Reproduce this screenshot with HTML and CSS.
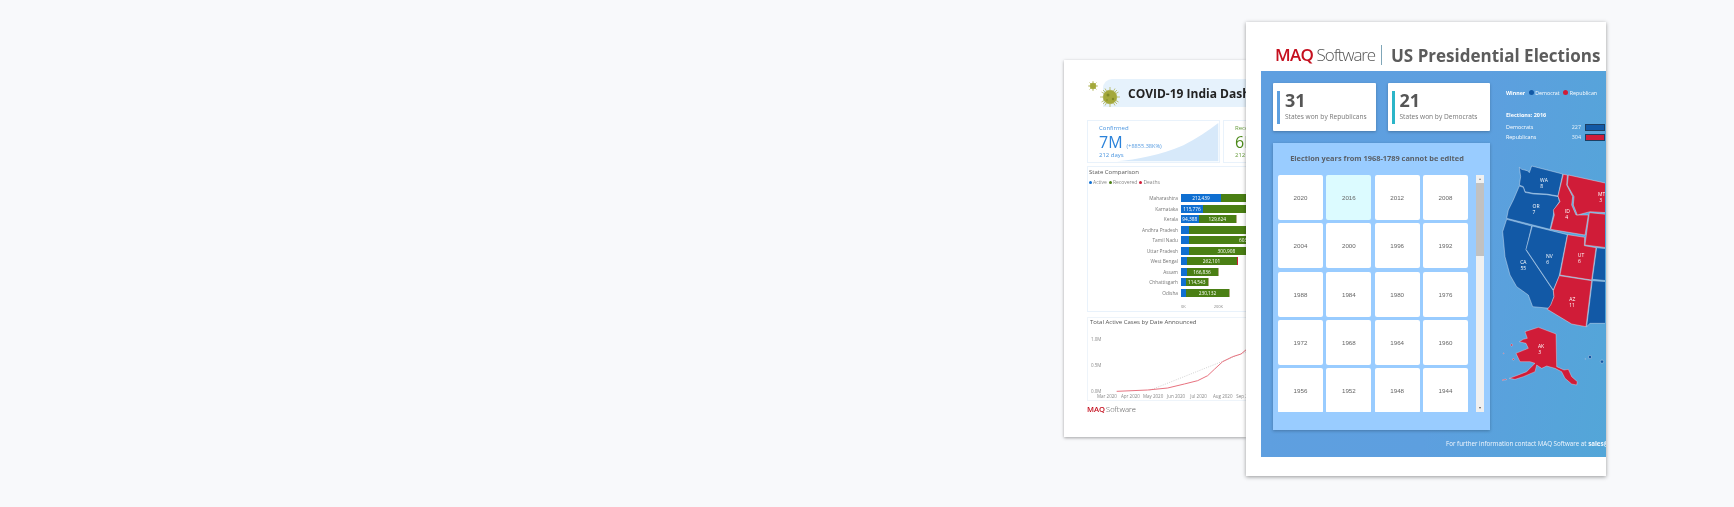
FILE: index.html
```html
<!DOCTYPE html>
<html lang="en">
<head>
<meta charset="utf-8">
<title>Power BI report showcase</title>
<link rel="stylesheet" href="styles.css">
</head>
<body>
<main class="stage">
  <article class="sheet covid">
    <header class="covid-head">
      <svg class="virus" viewBox="0 0 32 30" width="32" height="30">
        <g stroke="#a9ad45" stroke-width="0.7" fill="#a3a83a">
          <path d="M5 2v10M0 7h10M1.5 3.5l7 7M8.5 3.5l-7 7"/>
          <circle cx="5" cy="7" r="3"/>
          <path d="M22 8v20M12 18h20M15 11l14 14M29 11L15 25M17 9.5l10 17M27 9.5l-10 17M13.500 13l17 10M30.500 13l-17 10"/>
          <circle cx="22" cy="18" r="6.800"/>
        </g>
        <circle cx="20" cy="16" r="1.500" fill="#7f8a26"/>
        <circle cx="25" cy="20" r="1.200" fill="#7f8a26"/>
        <circle cx="19" cy="21" r="1" fill="#8d9630"/>
      </svg>
      <div class="covid-band"><h1 class="covid-title">COVID-19 India Dashboard</h1></div>
    </header>
    <section class="kpis">
      <div class="kpi">
        <svg class="kpi-area" viewBox="200 215 307 120" width="102" height="40"><path d="M200 333C260 328 330 315 400 285C440 265 475 240 505 218V333Z" fill="#d7e9fa"/></svg>
        <div class="kpi-label">Confirmed</div>
        <div class="kpi-value"><span class="kpi-big">7M</span><span class="kpi-delta">(+8855.38K%)</span></div>
        <div class="kpi-label">212 days</div>
      </div>
      <div class="kpi kpi-green">
        <div class="kpi-label">Recovered</div>
        <div class="kpi-value"><span class="kpi-big">6M</span></div>
        <div class="kpi-label">212 days</div>
      </div>
    </section>
    <section class="states">
      <h2 class="box-title">State Comparison</h2>
      <div class="legend">
        <span class="dot dot-blue"></span>Active
        <span class="dot dot-green"></span>Recovered
        <span class="dot dot-red"></span>Deaths
      </div>
      <div class="bar-rows">
        <div class="bar-row"><span class="bar-name">Maharashtra</span><span class="seg seg-a" style="width:40px">212,439</span><span class="seg seg-r" style="width:160px"></span></div>
        <div class="bar-row"><span class="bar-name">Karnataka</span><span class="seg seg-a" style="width:22px">115,776</span><span class="seg seg-r" style="width:160px"></span></div>
        <div class="bar-row"><span class="bar-name">Kerala</span><span class="seg seg-a" style="width:17.5px">94,388</span><span class="seg seg-r" style="width:37.5px">129,624</span><span class="seg seg-d" style="width:1px"></span></div>
        <div class="bar-row"><span class="bar-name">Andhra Pradesh</span><span class="seg seg-a" style="width:8px"></span><span class="seg seg-r" style="width:160px"></span></div>
        <div class="bar-row"><span class="bar-name">Tamil Nadu</span><span class="seg seg-a" style="width:8px"></span><span class="seg seg-r seg-end" style="width:160px">603,131</span></div>
        <div class="bar-row"><span class="bar-name">Uttar Pradesh</span><span class="seg seg-a" style="width:7.5px"></span><span class="seg seg-r seg-mid" style="width:160px">300,908</span></div>
        <div class="bar-row"><span class="bar-name">West Bengal</span><span class="seg seg-a" style="width:5.5px"></span><span class="seg seg-r" style="width:50px">262,101</span><span class="seg seg-x" style="width:1.5px"></span></div>
        <div class="bar-row"><span class="bar-name">Assam</span><span class="seg seg-a" style="width:5.5px"></span><span class="seg seg-r" style="width:31px">166,836</span><span class="seg seg-d" style="width:.5px"></span></div>
        <div class="bar-row"><span class="bar-name">Chhattisgarh</span><span class="seg seg-a" style="width:5px"></span><span class="seg seg-r" style="width:21.5px">114,543</span><span class="seg seg-d" style="width:.7px"></span></div>
        <div class="bar-row"><span class="bar-name">Odisha</span><span class="seg seg-a" style="width:5px"></span><span class="seg seg-r" style="width:43px">230,132</span><span class="seg seg-d" style="width:.7px"></span></div>
      </div>
      <div class="axis"><span>0K</span><span>200K</span></div>
    </section>
    <section class="cases">
      <h2 class="box-title">Total Active Cases by Date Announced</h2>
      <svg class="cases-plot" viewBox="111 51 600 222" width="200" height="74">
        <g class="plot-labels">
          <text x="120" y="92">1.0M</text>
          <text x="120" y="170">0.5M</text>
          <text x="120" y="248">0.0M</text>
          <text x="138" y="263">Mar 2020</text>
          <text x="210" y="263">Apr 2020</text>
          <text x="276" y="263">May 2020</text>
          <text x="348" y="263">Jun 2020</text>
          <text x="418" y="263">Jul 2020</text>
          <text x="486" y="263">Aug 2020</text>
          <text x="556" y="263">Sep 2020</text>
        </g>
        <path d="M296 241L600 120" fill="none" stroke="#bbb" stroke-width="2" stroke-dasharray="3 4"/>
        <path d="M197 244L290 240L350 234L400 222L440 212L470 197L490 178L515 155L545 140L570 132L588 117L620 100" fill="none" stroke="#e8727f" stroke-width="3"/>
      </svg>
    </section>
    <div class="brand brand-small"><span class="brand-maq">MAQ</span> <span class="brand-soft">Software</span></div>
  </article>

  <article class="sheet elections">
    <header class="el-head">
      <div class="brand brand-large"><span class="brand-maq">MAQ</span> <span class="brand-soft">Software</span></div>
      <span class="el-rule"></span>
      <h1 class="el-title">US Presidential Elections</h1>
    </header>
    <div class="el-body">
      <div class="el-main">
        <div class="el-left">
          <div class="tallies">
            <div class="tally tally-rep">
              <div class="tally-num">31</div>
              <div class="tally-text">States won by Republicans</div>
            </div>
            <div class="tally tally-dem">
              <div class="tally-num">21</div>
              <div class="tally-text">States won by Democrats</div>
            </div>
          </div>
          <section class="years">
            <h2 class="years-title">Election years from 1968-1789 cannot be edited</h2>
            <div class="years-scroll">
              <div class="years-grid">
                <div class="year">2020</div><div class="year year-on">2016</div><div class="year">2012</div><div class="year">2008</div>
                <div class="year">2004</div><div class="year">2000</div><div class="year">1996</div><div class="year">1992</div>
                <div class="year">1988</div><div class="year">1984</div><div class="year">1980</div><div class="year">1976</div>
                <div class="year">1972</div><div class="year">1968</div><div class="year">1964</div><div class="year">1960</div>
                <div class="year">1956</div><div class="year">1952</div><div class="year">1948</div><div class="year">1944</div>
              </div>
              <div class="scrollbar">
                <span class="arrow arrow-up"></span>
                <span class="thumb"></span>
                <span class="arrow arrow-down"></span>
              </div>
            </div>
          </section>
        </div>
        <aside class="el-right">
          <div class="winner"><b>Winner</b><span class="w-dot w-dem"></span>Democrat<span class="w-dot w-rep"></span>Republican</div>
          <h3 class="votes-title">Elections: 2016</h3>
          <div class="vote-row"><span class="vote-name">Democrats</span><span class="vote-num">227</span><span class="vote-bar vote-dem"></span></div>
          <div class="vote-row"><span class="vote-name">Republicans</span><span class="vote-num">304</span><span class="vote-bar vote-rep"></span></div>
          <svg class="map" viewBox="36 0 309 720" width="103" height="240">
            <g stroke="#f2f6fb" stroke-width="1.2" stroke-linejoin="round">
              <g fill="#1259a6">
                <path d="M88 22L95 28L112 32L118 38L125 18L218 42L204 108L170 102L130 100L105 95L100 80L88 75L92 50Z"/>
                <path d="M88 78L100 82L105 97L130 102L170 104L205 110L208 125L192 150L190 165L180 208L50 175L55 150L70 120Z"/>
                <path d="M50 178L125 198L108 270L190 392L192 410L180 445L128 440L115 405L80 380L60 345L45 290L38 215Z"/>
                <path d="M127 198L232 224L207 350L190 390L108 268Z"/>
                <path d="M320 263L350 266V362L307 358Z"/>
                <path d="M307 362L350 365V490H300L290 500Z"/>
              </g>
              <g fill="#d01c38">
                <path d="M220 43L232 45L230 75L248 110L245 135L258 165L295 165L285 225L182 208L193 165L190 150L210 125L204 108Z"/>
                <path d="M235 45L350 70V158L300 155L262 165L250 135L252 110L232 75Z"/>
                <path d="M298 158L350 163V263L285 255Z"/>
                <path d="M233 224L284 232L283 257L318 263L305 360L210 345Z"/>
                <path d="M208 347L305 362L288 500L245 492L172 448L182 435L192 410L190 392Z"/>
              </g>
              <g transform="translate(-150 450)">
                <path fill="#d01c38" stroke-width="1" d="M255 65L295 52L348 72L350 170L372 180L385 178L395 200L412 215L410 225L395 222L375 205L365 185L345 175L320 168L305 175L290 165L285 185L250 200L225 208L208 205L235 195L260 185L285 160L270 155L240 155L228 130L265 115L258 100L238 95L250 88L262 85Z"/>
                <path fill="#d01c38" stroke-width="1" d="M178 211L198 207L200 209L180 213Z"/>
                <circle cx="215" cy="105" r="3" fill="#d01c38" stroke-width="1"/>
                <circle cx="191" cy="130" r="1.500" fill="#d01c38" stroke-width="1"/>
                <circle cx="220" cy="148" r="2.500" fill="#d01c38" stroke-width="1"/>
                <circle cx="450" cy="141" r="5" fill="#1259a6" stroke-width="1"/>
                <circle cx="486" cy="155" r="5" fill="#1259a6" stroke-width="1"/>
                <circle cx="436" cy="147" r="1.500" fill="#1259a6" stroke-width="1"/>
              </g>
            </g>
            <g class="map-labels">
              <text x="162" y="65">WA</text><text x="155" y="83">8</text>
              <text x="138" y="145">OR</text><text x="132" y="163">7</text>
              <text x="232" y="158">ID</text><text x="230" y="177">4</text>
              <text x="335" y="108">MT</text><text x="332" y="127">3</text>
              <text x="100" y="311">CA</text><text x="100" y="330">55</text>
              <text x="178" y="295">NV</text><text x="173" y="311">6</text>
              <text x="273" y="290">UT</text><text x="268" y="308">6</text>
              <text x="247" y="423">AZ</text><text x="246" y="441">11</text>
              <text x="153" y="563">AK</text><text x="149" y="583">3</text>
            </g>
          </svg>
        </aside>
      </div>
      <footer class="el-foot">For further information contact MAQ Software at <b>sales@maqsoftware.com</b></footer>
    </div>
  </article>
</main>
</body>
</html>
```
FILE: styles.css
```css
* { box-sizing: border-box; }
html, body { margin: 0; padding: 0; }
body {
  width: 1734px;
  height: 507px;
  overflow: hidden;
  background: #f8f9fb;
  font-family: "Open Sans", "Noto Sans", sans-serif;
}
h1, h2, h3 { margin: 0; }
.stage { position: relative; width: 1734px; height: 507px; }
.sheet { position: absolute; background: #fff; overflow: hidden; }

/* Back sheet */
.covid {
  left: 1064px; top: 60px; width: 182px; height: 377px;
  padding: 19px 0 0 23px;
  overflow: visible;
  box-shadow: 0 1px 3px rgba(0,0,0,.35);
  filter: blur(.35px);
}
.covid > * { width: 159px; overflow: hidden; }
.covid > .covid-head { position: relative; height: 28px; padding-left: 16px; overflow: visible; }
.virus { position: absolute; left: 1px; top: 0; z-index: 1; }
.covid-band {
  height: 28px;
  background: #e6f2fc;
  border-radius: 9px 0 0 0;
  padding-left: 25px;
  display: flex;
  align-items: center;
  overflow: hidden;
}
.covid-title { font-size: 12px; font-weight: 700; color: #222; white-space: nowrap; }
.kpis { display: flex; gap: 3px; margin-top: 13px; }
.kpi {
  position: relative;
  flex: 0 0 133px;
  height: 43px;
  border: 1px solid #e9f2fb;
  padding: 3px 0 0 11px;
  color: #2a82da;
}
.kpi-green { color: #4c8a1a; }
.kpi-area { position: absolute; right: 0; bottom: 0; }
.kpi-label { position: relative; font-size: 6px; line-height: 9px; opacity: .85; }
.kpi-value { position: relative; display: flex; align-items: baseline; gap: 4px; height: 18px; }
.kpi-big { font-size: 16px; line-height: 18px; font-weight: 400; }
.kpi-delta { font-size: 5.6px; opacity: .8; }
.states {
  margin-top: 3px; height: 146px; padding-top: 1px;
  border: 1px solid #e9f2fb;
  border-right: 0;
}
.box-title { font-size: 6px; line-height: 9px; font-weight: 400; color: #555; padding-left: 1px; white-space: nowrap; }
.legend { display: flex; align-items: center; height: 10px; font-size: 5px; color: #888; padding-left: 1px; white-space: nowrap; }
.dot { width: 3px; height: 3px; border-radius: 50%; margin-right: 1px; }
.dot-blue { background: #0f6fd1; }
.dot-green { background: #4a7f14; margin-left: 2px; }
.dot-red { background: #d01c38; margin-left: 2px; }
.bar-rows { margin-top: 6px; }
.bar-row { display: flex; align-items: center; height: 10.5px; white-space: nowrap; }
.bar-name {
  flex: 0 0 93px;
  padding-right: 3px;
  text-align: right;
  font-size: 4.8px;
  color: #777;
}
.seg {
  flex: none;
  height: 8.4px;
  font-size: 4.8px;
  line-height: 8.4px;
  color: #fff;
  text-align: center;
}
.seg-a { background: #0f6fd1; }
.seg-r { background: #4a7f14; }
.seg-end { text-align: left; padding-left: 50px; }
.seg-mid { text-align: left; padding-left: 29px; }
.seg-d { background: #b5ad8a; }
.seg-x { background: #d01c38; }
.axis { display: flex; gap: 28px; padding-left: 93px; font-size: 4px; line-height: 10px; margin-top: 4px; color: #888; }
.cases { margin-top: 5px; height: 84px; border: 1px solid #eef4fa; border-right: 0; }
.cases .box-title { padding-left: 2px; }
.cases-plot { display: block; }
.plot-labels text { font-size: 13.5px; fill: #888; font-family: "Open Sans", sans-serif; }
.brand { white-space: nowrap; }
.brand-maq { font-weight: 600; color: #c5101f; }
.brand-soft { font-weight: 300; color: #555; }
.brand-small { margin-top: 3px; font-size: 7.6px; line-height: 11px; word-spacing: -1px; }

/* Front sheet */
.elections {
  left: 1246px; top: 22px; width: 360px; height: 454px;
  display: flex;
  flex-direction: column;
  padding: 0 0 19px 15px;
  box-shadow: 0 1px 4px rgba(0,0,0,.4);
  filter: blur(.2px);
}
.el-head { height: 49px; flex: none; display: flex; align-items: center; padding: 17px 0 0 14px; }
.brand-large { flex: 0 0 106px; font-size: 17px; line-height: 22px; word-spacing: -1px; }
.brand-large .brand-maq { letter-spacing: -.7px; }
.brand-large .brand-soft { letter-spacing: -1.1px; }
.el-rule { width: 1px; height: 20px; background: #7fa6b8; margin: 0 9px 0 0; }
.el-title { font-size: 17px; font-weight: 700; color: #5c5c5c; white-space: nowrap; }
.el-body {
  flex: 1;
  min-height: 0;
  background: linear-gradient(100deg, #5f9fe0 0%, #5d9fdf 55%, #53a6d8 100%);
  display: flex;
  flex-direction: column;
}
.el-main { display: flex; gap: 12px; height: 359px; padding: 12px 0 0 12px; flex: none; }
.el-left { flex: 0 0 217px; }
.tallies { display: flex; gap: 12px; }
.tally {
  position: relative;
  flex: 1;
  height: 48px;
  background: #fff;
  border-radius: 1px;
  box-shadow: 0 1px 3px rgba(0,0,0,.25);
  padding: 5px 0 0 12px;
  color: #555;
}
.tally::before {
  content: "";
  position: absolute;
  left: 4px; top: 8px;
  width: 3px; height: 33px;
  background: #5d9fdf;
}
.tally-dem::before { background: #2bb5c8; }
.tally-num { font-size: 18px; line-height: 24px; font-weight: 700; color: #565656; }
.tally-text { font-size: 6.6px; line-height: 10px; color: #777; white-space: nowrap; }
.years {
  margin-top: 12px;
  height: 287px;
  background: #99ccff;
  box-shadow: 0 1px 3px rgba(0,0,0,.25);
  padding: 0 6px 0 5px;
}
.years-title {
  height: 32px;
  padding-right: 8px;
  font-size: 7.4px;
  line-height: 30px;
  font-weight: 700;
  color: #5a6068;
  text-align: center;
  white-space: nowrap;
}
.years-scroll { display: flex; gap: 8px; height: 237px; overflow: hidden; }
.years-grid {
  flex: 0 0 190px;
  display: grid;
  grid-template-columns: repeat(4, 45px);
  grid-auto-rows: 45px;
  gap: 3.25px 3.33px;
}
.year {
  background: #fff;
  border-radius: 2px;
  display: flex;
  align-items: center;
  justify-content: center;
  font-family: "Liberation Sans", sans-serif;
  font-size: 6.2px;
  color: #666;
}
.year-on { background: #dcfbff; }
.scrollbar {
  flex: 0 0 8px;
  background: #f0f0f0;
  display: flex;
  flex-direction: column;
  align-items: center;
  padding-top: 3px;
}
.thumb { width: 100%; height: 73px; margin-top: 3px; background: #c1c1c1; }
.arrow { width: 0; height: 0; border-left: 1.5px solid transparent; border-right: 1.5px solid transparent; }
.arrow-up { border-bottom: 2px solid #888; }
.arrow-down { border-top: 2px solid #555; margin-top: auto; margin-bottom: 3px; }
.el-right { flex: 0 0 103px; overflow: hidden; padding-top: 5px; color: #fff; }
.winner {
  display: flex; align-items: center; height: 9px;
  padding-left: 4px;
  font-size: 5.3px;
  white-space: nowrap;
}
.w-dot { width: 5px; height: 5px; border-radius: 50%; margin: 0 1.5px 0 3.5px; flex: none; }
.w-dem { background: #1259a6; }
.w-rep { background: #d01c38; }
.votes-title { font-size: 5.5px; line-height: 10px; margin: 13px 0 2px; padding-left: 4px; font-weight: 700; }
.vote-row { display: flex; align-items: center; height: 10px; font-size: 5.4px; padding-left: 4px; white-space: nowrap; }
.vote-name { width: 70px; }
.vote-num { width: 14px; text-align: right; opacity: .85; }
.vote-bar { flex: none; width: 20px; height: 7px; margin-left: 4px; border: 1px solid #1d3f63; }
.vote-dem { background: #1259a6; }
.vote-rep { background: #d01c38; }
.map { display: block; margin-top: 18px; }
.map-labels text { font-size: 15px; fill: #fff; text-anchor: middle; font-family: "Open Sans", sans-serif; }
.el-foot {
  flex: 1;
  padding-left: 185px;
  font-size: 6.2px;
  line-height: 27px;
  color: #f2f7fd;
  white-space: nowrap;
  overflow: hidden;
}
```
